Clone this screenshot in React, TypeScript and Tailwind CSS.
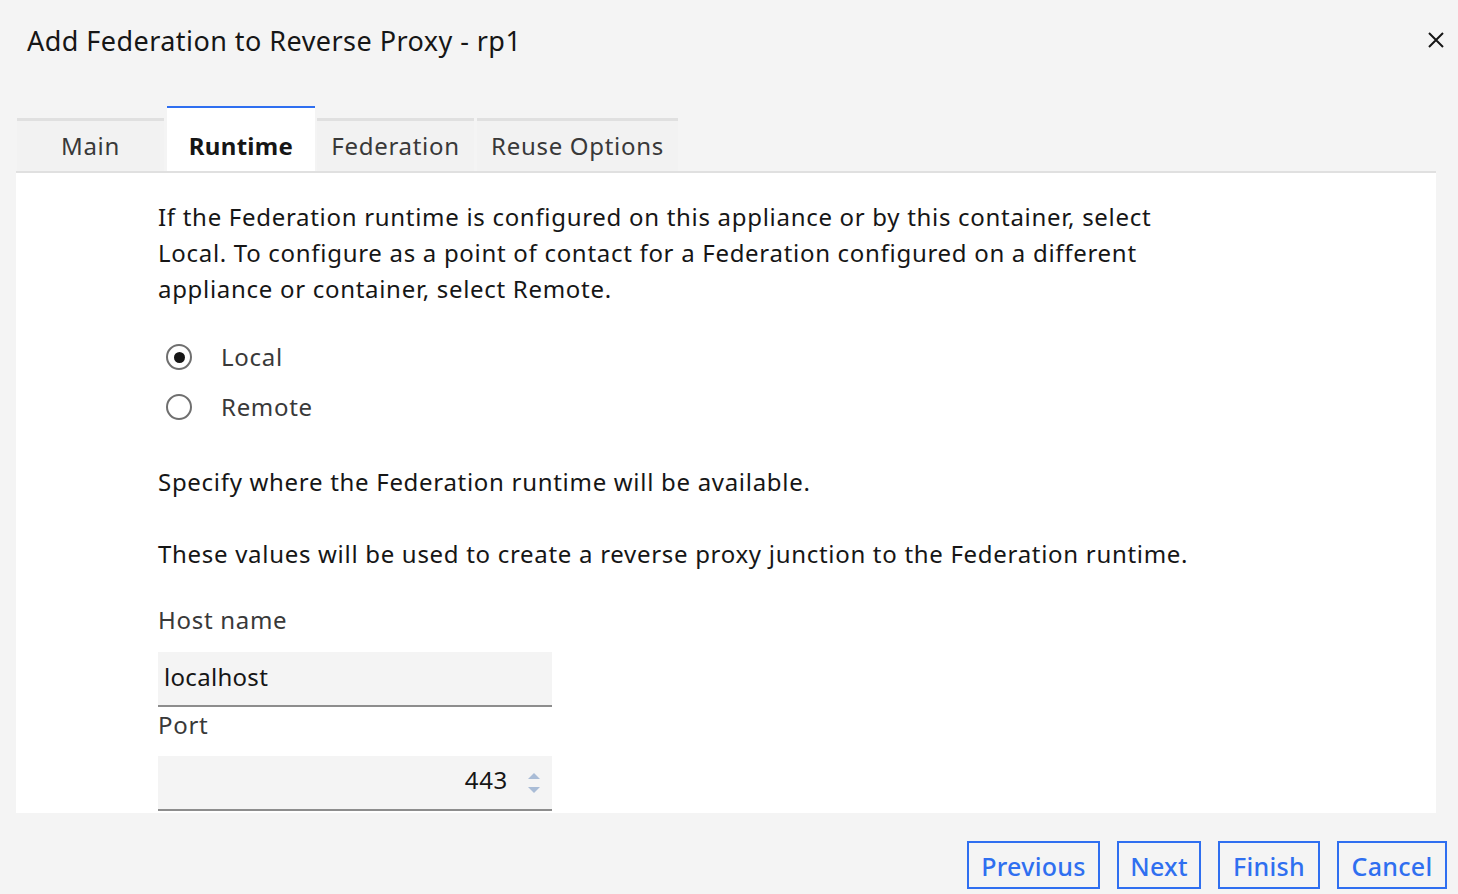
import { useState } from "react";

const tabs = ["Main", "Runtime", "Federation", "Reuse Options"];

const buttons: [string, string][] = [
  ["Previous", "w-[133px]"],
  ["Next", "w-[84px]"],
  ["Finish", "w-[102px]"],
  ["Cancel", "w-[110px]"],
];

function Radio({ checked }: { checked: boolean }) {
  return (
    <span className="flex h-[26px] w-[26px] items-center justify-center rounded-full border-2 border-[#6f6f6f] bg-white">
      {checked && <span className="h-[11px] w-[11px] rounded-full bg-[#161616]" />}
    </span>
  );
}

export default function App() {
  const [mode, setMode] = useState("local");

  return (
    <div
      className="flex h-[894px] w-[1458px] flex-col bg-[#f4f4f4] tracking-[0.7px] text-[#161616]"
      style={{ fontFamily: '"Noto Sans", "Open Sans", sans-serif' }}
    >
      <div className="flex h-[80px] items-center justify-between pl-[27px] pr-[12px]">
        <h1 className="text-[27px] leading-none tracking-[0.45px] text-[#161616]">
          Add Federation to Reverse Proxy - rp1
        </h1>
        <button type="button" aria-label="Close" className="text-[#161616]">
          <svg viewBox="0 0 20 20" className="h-5 w-5" fill="none" stroke="currentColor" strokeWidth={2}>
            <path d="M3 3 17 17M17 3 3 17" />
          </svg>
        </button>
      </div>

      {/* tab strip */}
      <div className="mt-[26px] flex items-end pl-[17px]">
        {tabs.map((t) => {
          const active = t === "Runtime";
          return active ? (
            <div
              key={t}
              className="mr-[2px] flex h-[65px] w-[148px] items-center justify-center border-t-2 border-[#2f6ff0] bg-white pt-[12px] text-[24px] font-bold tracking-[0.3px] text-[#161616]"
            >
              {t}
            </div>
          ) : (
            <div
              key={t}
              className="mr-[3px] flex h-[53px] items-center justify-center border-t-[3px] border-[#e0e0e0] bg-[#f2f2f2] text-[24px] text-[#393939]"
              style={{ width: t === "Main" ? 147 : t === "Federation" ? 157 : 201 }}
            >
              {t}
            </div>
          );
        })}
      </div>

      <div className="ml-[16px] mr-[22px] h-[642px] border-t-2 border-[#e0e0e0] bg-white pl-[142px] pt-[26px]">
        <p className="w-[1010px] text-[24px] leading-[36px]">
          If the Federation runtime is configured on this appliance or by this container, select
          Local. To configure as a point of contact for a Federation configured on a different
          appliance or container, select Remote.
        </p>

        <div className="mt-[37px] flex flex-col gap-[24px] pl-[8px]">
          {[
            ["local", "Local"],
            ["remote", "Remote"],
          ].map(([k, label]) => (
            <label key={k} className="flex h-[26px] cursor-pointer items-center gap-[29px]" onClick={() => setMode(k)}>
              <Radio checked={mode === k} />
              <span className="text-[24px] text-[#393939]">{label}</span>
            </label>
          ))}
        </div>

        <p className="mt-[44px] text-[24px] leading-[36px]">
          Specify where the Federation runtime will be available.
        </p>
        <p className="mt-[36px] text-[24px] leading-[36px]">
          These values will be used to create a reverse proxy junction to the Federation runtime.
        </p>

        <div className="mt-[30px] text-[24px] leading-[36px] text-[#393939]">Host name</div>
        <div className="mt-[14px] flex h-[55px] w-[394px] items-center border-b-2 border-[#8d8d8d] bg-[#f4f4f4] px-[6px] pb-[4px] text-[24px] tracking-[0.3px]">
          localhost
        </div>
        <div className="mt-[1px] text-[24px] leading-[34px] text-[#393939]">Port</div>
        <div className="mt-[14px] flex h-[55px] w-[394px] items-center justify-end border-b-2 border-[#8d8d8d] bg-[#f4f4f4] pr-[10px] text-[24px]">
          <span className="pb-[5px]">443</span>
          <svg viewBox="0 0 16 26" className="ml-[18px] h-[26px] w-[16px]">
            <path d="M2 9 8 3 14 9Z" fill="#a9bcd6" />
            <path d="M2 17 8 23 14 17Z" fill="#a9bcd6" />
          </svg>
        </div>
      </div>

      <div className="flex justify-end gap-[17px] pr-[11px] pt-[28px]">
        {buttons.map(([b, w]) => (
          <button
            key={b}
            type="button"
            className={`flex h-[48px] items-center justify-center border-2 border-[#2f6ff0] pt-[3px] text-[25px] font-medium tracking-[0.3px] text-[#2f6ff0] ${w}`}
          >
            {b}
          </button>
        ))}
      </div>
    </div>
  );
}
